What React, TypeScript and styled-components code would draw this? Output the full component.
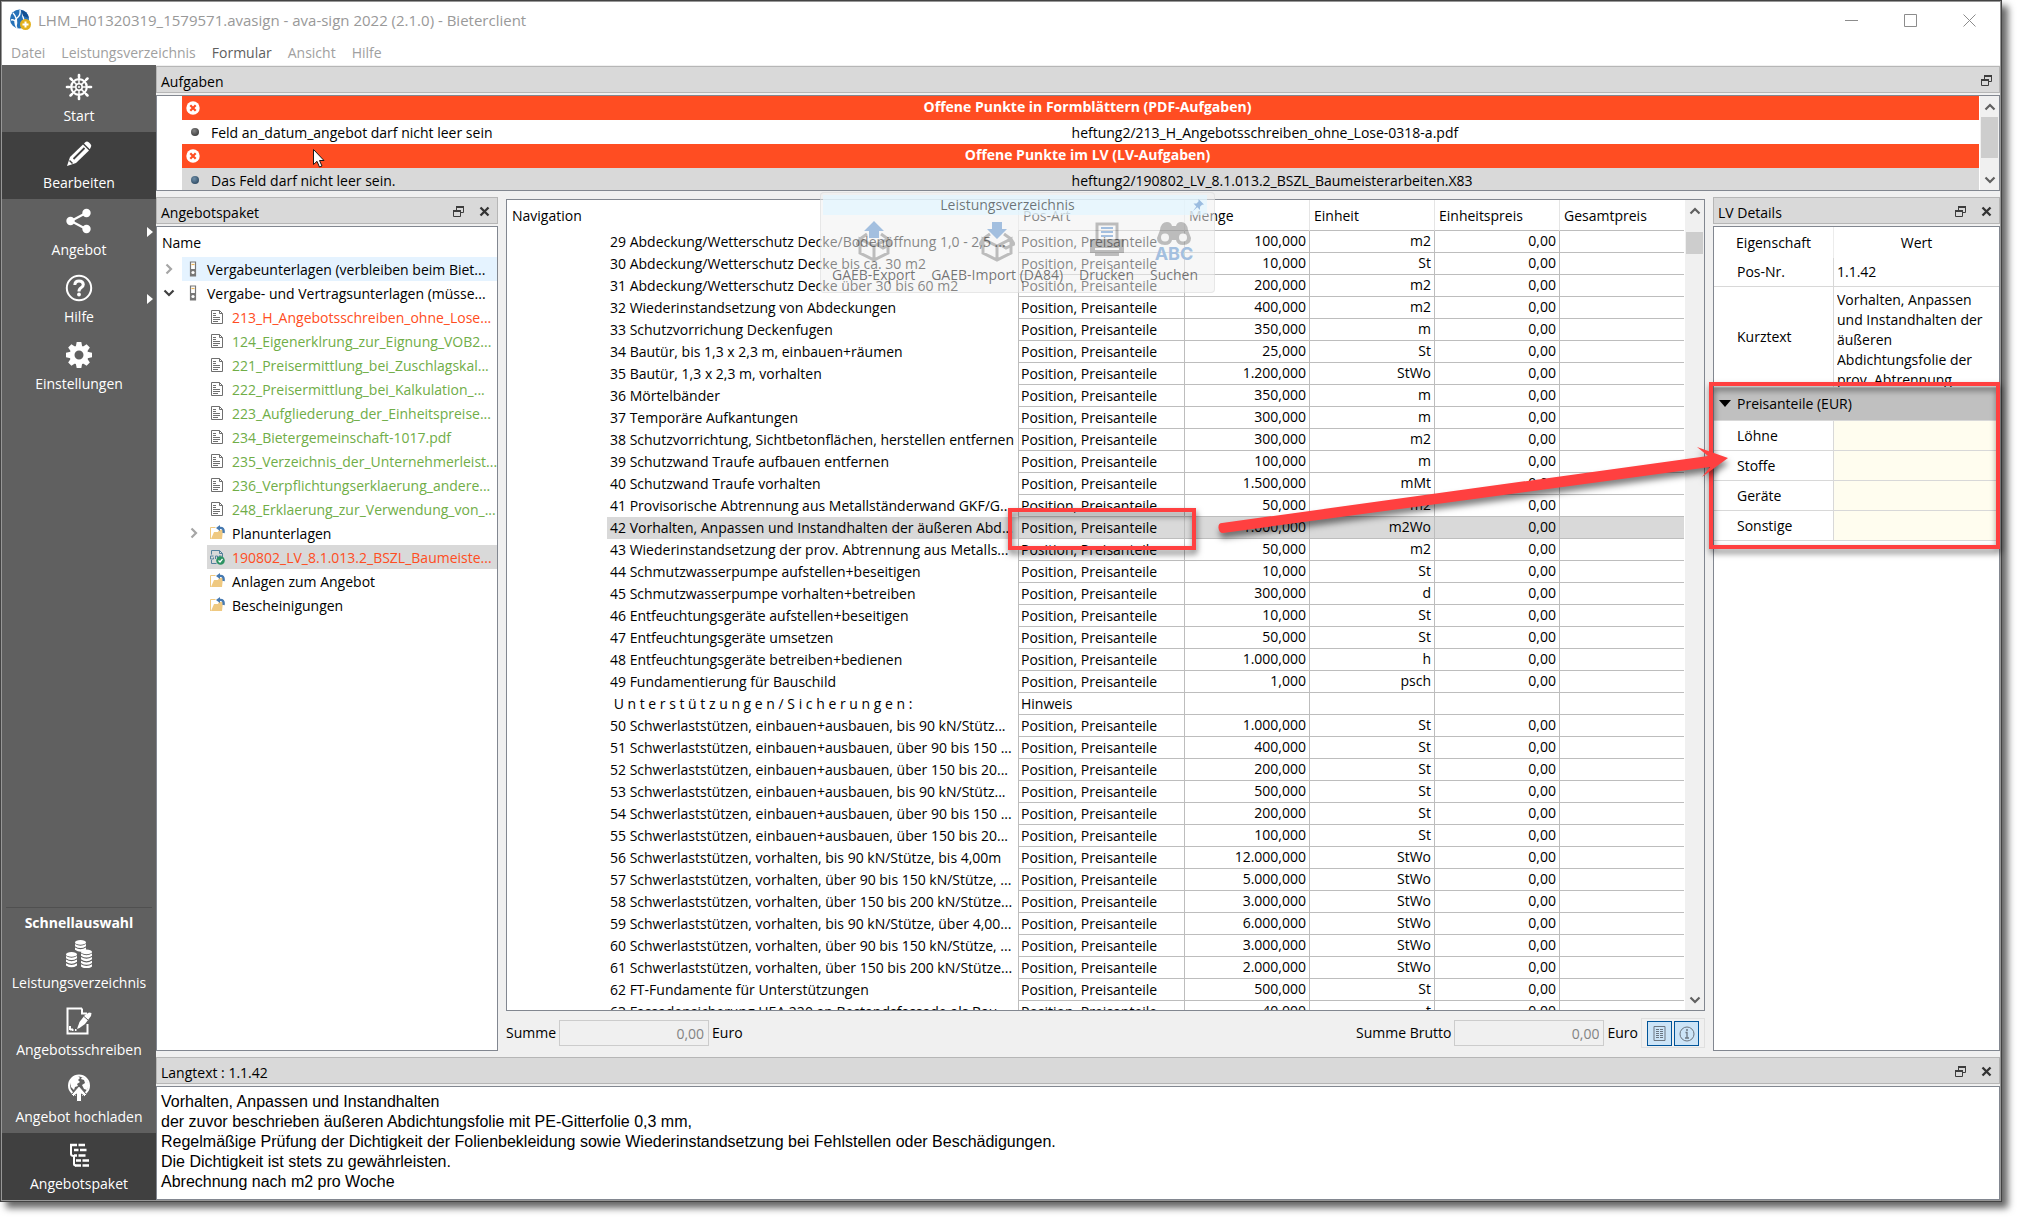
import React from "react";
import styled, { createGlobalStyle, css } from "styled-components";

const UI_FONT = `"Open Sans", "Noto Sans", sans-serif`;

const GlobalStyle = createGlobalStyle`
  *, *::before, *::after { box-sizing: border-box; }
  body { margin: 0; background: #fff; font: 14px/20px ${UI_FONT}; color: #000; overflow: hidden; }
  button, input, textarea { font: inherit; color: inherit; margin: 0; padding: 0; border: 0; background: none; border-radius: 0; }
  button { cursor: default; }
  svg { display: block; flex: none; }
  table { border-collapse: separate; border-spacing: 0; }
  th, td { padding: 0; font-weight: 400; text-align: left; }
  ul { list-style: none; margin: 0; padding: 0; }
  h1, h2, h3 { margin: 0; font: inherit; }
`;

/* ---------- window frame ---------- */

const Desktop = styled.div`
  height: 100vh;
  padding: 0 15px 15px 0;
  position: relative;
`;

const AppWindow = styled.div`
  height: 100%;
  display: flex;
  flex-direction: column;
  border: 1px solid #434343;
  box-shadow: inset 0 0 0 1px #979797, 6px 6px 7px rgba(0, 0, 0, 0.6);
  padding: 1px;
  background: #fff;
`;

const TitleBar = styled.header`
  display: flex;
  align-items: center;
  height: 38px;
  padding: 0 24px 2px 8px;
  gap: 6px;
  color: #999;
  font-size: 15px;
`;

const WindowTitle = styled.h1`
  flex: 1;
`;

const WindowButtons = styled.div`
  display: flex;
  gap: 46px;
  align-items: center;
`;

const WindowButton = styled.button`
  width: 13px;
  height: 13px;
`;

const MenuBar = styled.nav`
  display: flex;
  gap: 16px;
  height: 25px;
  padding: 0 9px;
  align-items: center;
`;

const MenuItem = styled.button<{ $enabled?: boolean }>`
  color: ${(p) => (p.$enabled ? "#5f5f5f" : "#a0a0a0")};
`;

const Body = styled.div`
  flex: 1;
  min-height: 0;
  display: flex;
`;

/* ---------- sidebar ---------- */

const Sidebar = styled.nav`
  width: 154px;
  background: #606060;
  color: #fff;
  display: flex;
  flex-direction: column;
`;

const SideButton = styled.button<{ $active?: boolean; $submenu?: boolean }>`
  position: relative;
  height: 67px;
  padding-top: 8px;
  display: flex;
  flex-direction: column;
  align-items: center;
  gap: 5px;
  color: #fff;
  background: ${(p) => (p.$active ? "#404040" : "transparent")};
  svg { height: 28px; }
  ${(p) =>
    p.$submenu &&
    css`
      &::after {
        content: "";
        position: absolute;
        right: 3px;
        top: 28px;
        border: 5px solid transparent;
        border-left: 6px solid #fff;
        border-right: 0;
      }
    `}
`;

const QuickHeading = styled.h2`
  margin: auto 4px 0;
  border-top: 1px solid #505050;
  padding: 5px 0 0;
  font-weight: 700;
  font-size: 14px;
  line-height: 19px;
  text-align: center;
`;

/* ---------- docks ---------- */

const Workspace = styled.main`
  flex: 1;
  min-width: 0;
  display: flex;
  flex-direction: column;
  gap: 6px;
  padding-top: 1px;
  background: #f0f0f0;
`;

const Middle = styled.div`
  flex: 1;
  min-height: 0;
  display: flex;
  gap: 8px;
`;

const Dock = styled.section<{ $width?: number }>`
  display: flex;
  flex-direction: column;
  gap: 2px;
  ${(p) => p.$width && `width: ${p.$width}px; flex: none;`}
`;

const DockHeader = styled.header`
  height: 27px;
  display: flex;
  align-items: center;
  gap: 15px;
  padding: 4px 7px 0 4px;
  background: #d9d9d9;
  border: 1px solid #b6b6b6;
`;

const DockTitle = styled.h2`
  flex: 1;
`;

const DockButton = styled.button`
  width: 11px;
  height: 16px;
`;

const Frame = styled.div<{ $height?: number }>`
  position: relative;
  background: #fff;
  border: 1px solid #828790;
  display: flex;
  overflow: hidden;
  ${(p) => (p.$height ? `height: ${p.$height}px;` : "flex: 1; min-height: 0;")}
`;

/* ---------- scroll bar ---------- */

const ScrollTrack = styled.div`
  width: 20px;
  flex: none;
  display: flex;
  flex-direction: column;
  background: #f0f0f0;
  border-left: 1px solid #fff;
`;

const ScrollArrow = styled.button`
  height: 21px;
  display: flex;
  align-items: center;
  justify-content: center;
`;

const ScrollSpace = styled.div<{ $offset?: number }>`
  flex: 1;
  padding-top: ${(p) => p.$offset ?? 0}px;
`;

const ScrollThumb = styled.div<{ $height: number }>`
  height: ${(p) => p.$height}px;
  margin: 0 1px;
  background: #cdcdcd;
`;

/* ---------- task list ---------- */

const TaskTable = styled.table`
  flex: 1;
  margin-left: 25px;
  table-layout: fixed;
  align-self: flex-start;
  td, th { height: 24px; line-height: 22px; white-space: nowrap; }
`;

const TaskGroup = styled.tr`
  background: #ff4d22;
  color: #fff;
  th { font-weight: 700; text-align: center; padding: 0 6px 2px 0; }
  svg { margin: 0 auto 0 4px; }
`;

const TaskRow = styled.tr<{ $selected?: boolean }>`
  background: ${(p) => (p.$selected ? "#d9d9d9" : "#fff")};
  td + td { padding-left: 9px; padding-top: 1px; }
  td + td + td { padding-left: 7px; }
`;

const Bullet = styled.span<{ $blue?: boolean }>`
  display: block;
  width: 8px;
  height: 8px;
  margin: 0 auto 0 9px;
  border-radius: 50%;
  background: radial-gradient(circle at 40% 35%, ${(p) => (p.$blue ? "#6f8fa9, #1d3850" : "#858585, #262626")});
`;

/* ---------- package tree ---------- */

const Tree = styled.ul`
  flex: 1;
  min-width: 0;
`;

const TreeHead = styled.li`
  height: 30px;
  padding: 6px 5px 0;
`;

const Node = styled.li`
  height: 24px;
  display: flex;
`;

const Toggle = styled.span<{ $level: number }>`
  width: ${(p) => (p.$level ? 50 : 25)}px;
  padding-right: 7px;
  flex: none;
  display: flex;
  align-items: center;
  justify-content: flex-end;
`;

const NodeLabel = styled.span<{ $color: string; $background?: string; $level: number }>`
  flex: 1;
  min-width: 0;
  display: flex;
  align-items: center;
  gap: ${(p) => (p.$level ? 7 : 10)}px;
  padding-top: 2px;
  padding-left: ${(p) => (p.$level ? 3 : 7)}px;
  white-space: nowrap;
  color: ${(p) => p.$color};
  background: ${(p) => p.$background ?? "transparent"};
  svg { margin-bottom: 2px; }
`;

/* ---------- position table ---------- */

const Center = styled.section`
  flex: 1;
  min-width: 0;
  padding: 2px 0 3px;
  display: flex;
  flex-direction: column;
  gap: 7px;
`;

const Positions = styled.table`
  flex: 1;
  min-width: 0;
  table-layout: fixed;
  align-self: flex-start;
  white-space: nowrap;
  thead th {
    height: 31px;
    padding: 2px 4px 0;
    border-bottom: 1px solid #bdbdbd;
    border-left: 1px solid #e5e5e5;
  }
  thead th:first-child { border-color: transparent; }
`;

const PositionRow = styled.tr<{ $selected?: boolean }>`
  th, td {
    height: 22px;
    line-height: 20px;
    background: ${(p) => (p.$selected ? "#d9d9d9" : "#fff")};
  }
  th { padding-left: 100px; background: #fff; overflow: hidden; }
  th span {
    display: block;
    height: 22px;
    line-height: 22px;
    padding-left: 3px;
    background: ${(p) => (p.$selected ? "#d9d9d9" : "transparent")};
  }
  td {
    position: relative;
    border-left: 1px solid #bdbdbd;
    border-bottom: 1px solid #bdbdbd;
    padding: 0 3px 1px;
    text-align: right;
  }
  th + td { text-align: left; padding: 1px 2px 0; }
`;

const CellMarker = styled.div`
  position: absolute;
  z-index: 2;
  inset: -9px -12px -12px -11px;
  border: 4px solid #ff4040;
  filter: drop-shadow(1px 4px 3px rgba(0, 0, 0, 0.55));
  pointer-events: none;
`;

const Totals = styled.footer`
  height: 30px;
  display: flex;
  align-items: center;
  gap: 3px;
`;

const Total = styled.label`
  display: flex;
  align-items: center;
  gap: 3px;
  &:nth-child(2) { margin-left: auto; }
`;

const TotalInput = styled.input`
  width: 150px;
  height: 26px;
  padding: 0 4px;
  border: 1px solid #ccc;
  background: #f0f0f0;
  color: #838383;
  text-align: right;
`;

const ToggleGroup = styled.div`
  display: flex;
  gap: 2px;
  height: 30px;
  padding: 2px 5px;
  border: 1px solid #dfdfdf;
`;

const ToggleButton = styled.button`
  width: 25px;
  height: 25px;
  display: flex;
  align-items: center;
  justify-content: center;
  border: 1px solid #005499;
  background: #cce4f7;
`;

/* ---------- LV details ---------- */

const Details = styled.table`
  width: 100%;
  table-layout: fixed;
  align-self: flex-start;
  td, th { border-bottom: 1px solid #d8d8d8; }
  tbody th { padding-left: 23px; }
  td { border-left: 1px solid #d8d8d8; padding-left: 3px; }
  thead th { height: 31px; border-bottom: 0; text-align: center; }
  thead th + th { border-left: 1px solid #ececec; }
`;

const DetailRow = styled.tr<{ $height: number }>`
  th, td { height: ${(p) => p.$height}px; }
`;

const ShortText = styled.div`
  height: 99px;
  padding-top: 2px;
  overflow: hidden;
`;

const GroupHead = styled.th`
  height: 33px;
  background: #c0c0c0;
  && { padding-left: 5px; }
  button { display: flex; align-items: center; gap: 6px; }
`;

const PriceInput = styled.input`
  display: block;
  width: 100%;
  height: 29px;
  background: #fffdef;
`;

const PriceCell = styled.td`
  && { padding: 0; }
`;

const GroupMarker = styled.div`
  position: absolute;
  z-index: 3;
  top: 185px;
  left: -4px;
  right: 0;
  height: 167px;
  border: 4px solid #ff4040;
  filter: drop-shadow(1px 4px 3px rgba(0, 0, 0, 0.55));
  pointer-events: none;
`;

const DetailDock = styled(Dock)`
  position: relative;
`;

/* ---------- long text ---------- */

const LongText = styled.textarea`
  flex: 1;
  padding: 5px 4px 0;
  border: 0;
  outline: 0;
  resize: none;
  overflow: hidden;
  font: 16px/20px "Liberation Sans", Arial, sans-serif;
`;

/* ---------- floating toolbar ---------- */

const FloatingBar = styled.div`
  position: absolute;
  z-index: 4;
  left: 820px;
  top: 192px;
  width: 395px;
  height: 101px;
  padding: 2px;
  border: 1px solid rgba(200, 200, 200, 0.35);
  border-radius: 4px;
  background: rgba(240, 240, 240, 0.55);
  color: rgba(0, 0, 0, 0.55);
`;

const FloatingTitle = styled.div`
  display: flex;
  align-items: center;
  height: 20px;
  padding-right: 3px;
  margin-right: 5px;
  background: rgba(225, 245, 255, 0.7);
  span { flex: 1; text-align: center; }
`;

const FloatingTools = styled.div`
  display: flex;
  gap: 16px;
  padding: 5px 9px 0;
`;

const FloatingTool = styled.button`
  display: flex;
  flex-direction: column;
  align-items: center;
  gap: 3px;
`;

const ArrowLayer = styled.svg`
  position: absolute;
  z-index: 5;
  left: 1210px;
  top: 440px;
  pointer-events: none;
  filter: drop-shadow(1px 5px 3px rgba(0, 0, 0, 0.5));
`;

const Cursor = styled.svg`
  position: absolute;
  z-index: 5;
  left: 312px;
  top: 148px;
`;

/* ---------- drawings ---------- */

const AppLogo = () => (
  <svg width="22" height="22" viewBox="0 0 22 22">
    <circle cx="9.500" cy="10" r="9.500" fill="#2672b8" />
    <path d="M3 4q5 5 3 14M10 1q1 5-3 8t0 10M13 2q-1 5 1 9M1 11q3-1 5 2" stroke="#fff" strokeWidth="1.400" fill="none" />
    <path d="M11 1q6 1 8 8l-6-2z" fill="#124f91" />
    <circle cx="15.500" cy="15.500" r="5.500" fill="#e3b11d" />
    <path d="M15.500 12.500v6M12.500 15.500h6" stroke="#fff" strokeWidth="2" />
  </svg>
);

const WheelIcon = () => (
  <svg width="28" viewBox="-14 -14 28 28" stroke="#fff" fill="none">
    <circle r="7.800" strokeWidth="2.200" />
    <circle r="3.200" strokeWidth="1.600" />
    <circle r="1" fill="#fff" stroke="none" />
    {[0, 45, 90, 135, 180, 225, 270, 315].map((a) => (
      <g key={a} transform={`rotate(${a})`}>
        <path d="M3 0h9.500" strokeWidth="1.500" />
        <path d="M10 0h2" strokeWidth="2.600" strokeLinecap="round" />
      </g>
    ))}
  </svg>
);

const PencilIcon = () => (
  <svg width="28" viewBox="0 0 28 28">
    <path d="M2 26l3-9L18 4.500l6 6L11 23z" fill="#fff" />
    <path d="M19 3.500l1.500-1.500q1.500-1.300 3.500.5l1.500 1.500q1.500 1.700.3 3.300L24.800 9.300z" fill="#fff" />
    <path d="M8.500 19L19.500 8" stroke="#404040" strokeWidth="1.800" />
    <path d="M4.500 20.500l3 3" stroke="#404040" strokeWidth="1.400" />
  </svg>
);

const ShareIcon = () => (
  <svg width="28" viewBox="0 0 28 28" fill="#fff">
    <path d="M6 14L21 6M6 14l15 8" stroke="#fff" strokeWidth="2.200" />
    <circle cx="5.500" cy="14" r="4.200" />
    <circle cx="21.500" cy="6" r="4.200" />
    <circle cx="21.500" cy="22" r="4.200" />
  </svg>
);

const HelpIcon = () => (
  <svg width="28" viewBox="0 0 28 28" stroke="#fff" fill="none">
    <circle cx="14" cy="14" r="12.200" strokeWidth="2" />
    <path d="M9.800 11q.2-4 4.200-4t4.300 3.500q0 2-2.200 3.300T14 17.500" strokeWidth="3" />
    <circle cx="14" cy="20.500" r="1.900" fill="#fff" stroke="none" />
  </svg>
);

const GearIcon = () => (
  <svg width="28" viewBox="-14 -14 28 28">
    <circle r="7" stroke="#fff" strokeWidth="5" fill="none" />
    {Array.from({ length: 8 }, (_, i) => (
      <path key={i} transform={`rotate(${i * 45})`} d="M-3.200-8.500L-2.300-13h4.600l.9 4.500z" fill="#fff" />
    ))}
  </svg>
);

const CoinStack = ({ x, y, count }: { x: number; y: number; count: number }) => (
  <g transform={`translate(${x} ${y})`}>
    <ellipse cx="5.500" cy="2.400" rx="5.500" ry="2.400" fill="#fff" />
    {Array.from({ length: count }, (_, i) => (
      <path key={i} d={`M0 ${i * 3.6 + 4}q5.500 3.400 11 0v2.200q-5.500 3.800-11 0z`} fill="#fff" />
    ))}
  </g>
);

const CoinsIcon = () => (
  <svg width="28" viewBox="0 0 28 28">
    <CoinStack x={10} y={0} count={2} />
    <CoinStack x={1} y={12} count={3} />
    <CoinStack x={16} y={9.5} count={4} />
  </svg>
);

const SignIcon = () => (
  <svg width="28" viewBox="0 0 28 28" fill="none" stroke="#fff">
    <path d="M17 1.500H2.500v25h20V17M17 1.500v5h5" strokeWidth="2" />
    <path d="M5 19v4M7 23h1.500M10 23h1.500M5 22.500h3" strokeWidth="2" />
    <path d="M12 22l2.500-7L20 8l4-2.500 2.500.5L26 9l-6 8-5.500 4z" fill="#fff" stroke="none" />
    <path d="M19 9.500l4 3.500" stroke="#606060" />
  </svg>
);

const UploadIcon = () => (
  <svg width="28" viewBox="0 0 28 28">
    <circle cx="14" cy="11.500" r="10" fill="none" stroke="#fff" strokeWidth="2" />
    <path d="M5 8q2-5 8-6l2 2-2 2 2 2-3 2 1 2-3 1-1 3-3-3zM17 3l4 2 3 6-2 5-3-1-2-4 3-2-1-3-3-1z" fill="#fff" />
    <path d="M14 12l7.500 8.500-2 2-3-2.500V27.500h-5V20l-3 2.500-2-2z" fill="#fff" stroke="#606060" strokeWidth="1" />
  </svg>
);

const PackageIcon = () => (
  <svg width="28" viewBox="0 0 28 28" stroke="#fff" strokeWidth="2.600" fill="none">
    <path d="M6 3v10q0 2 3 2M9 14v9q0 1.500 2 1.500" strokeWidth="2" />
    <path d="M5 4h7M13.500 4H20M9 9h4.500M15 9h6.500M9 14.500h3M13.500 14.500h7M11 19.500h5M17.500 19.500H24M10 24.500h6M17.500 24.500H24" />
  </svg>
);

const FloatIcon = () => (
  <svg width="11" height="16" viewBox="0 0 11 16" fill="none" stroke="#3d3d3d">
    <path d="M3.500 5V1.500h7v6H8" />
    <path d="M3 2h8" strokeWidth="2" />
    <path d="M.5 5.500h7v6h-7z" />
    <path d="M0 6h8" strokeWidth="2" />
  </svg>
);

const CloseIcon = () => (
  <svg width="11" height="16" viewBox="0 0 11 16">
    <path d="M1.500 2.500l8 8M9.500 2.500l-8 8" stroke="#333" strokeWidth="2.300" />
  </svg>
);

const Chevron = ({ rotate = 0, color = "#606060" }: { rotate?: number; color?: string }) => (
  <svg width="12" height="12" viewBox="-6 -6 12 12">
    <path transform={`rotate(${rotate})`} d="M-4.500 2.500L0-2 4.500 2.500" fill="none" stroke={color} strokeWidth="2.200" />
  </svg>
);

const BinderIcon = () => (
  <svg width="8" height="16" viewBox="0 0 8 16">
    <path d="M1.500 1h5v14h-5z" fill="#fff" stroke="#777" strokeWidth="1.200" />
    <path d="M2.500 3.500h3" stroke="#edb65a" strokeWidth="1.200" />
    <path d="M1 8h6v7H1z" fill="#777" />
    <circle cx="4" cy="11.500" r="1.600" fill="#fff" />
  </svg>
);

const FileIcon = () => (
  <svg width="15" height="16" viewBox="0 0 15 16" fill="none" stroke="#6f6f6f">
    <path d="M1.500 1.500h8l3 3v10h-11zM9.500 1.500v3h3" />
    <path d="M3 4.500h3M3 6.500h3M3 8.500h7M3 10.500h7M3 12.500h5" />
  </svg>
);

const FolderIcon = () => (
  <svg width="15" height="16" viewBox="0 0 15 16">
    <path d="M.5 14V2.500h5" fill="none" stroke="#efc981" />
    <path d="M1 14l3-7h4l1-2h4l-1 9z" fill="#efc981" />
    <path d="M13.500 8q1-6-4.500-5" fill="none" stroke="#4679b0" strokeWidth="2.400" />
    <path d="M6 3L10 0v6z" fill="#4679b0" />
  </svg>
);

const LvIcon = () => (
  <svg width="15" height="16" viewBox="0 0 15 16" fill="none" stroke="#54809c">
    <path d="M1.500 5.500v-4h8l3 3v5M1.500 11v3.500h5M9.500 1.500v3h3" />
    <path d="M3.500 7H.5v3h3V8.500M5.500 10V7h2v3M9 10V7h2.500" />
    <circle cx="10.500" cy="11.500" r="4.300" fill="#2c9363" stroke="none" />
    <path d="M8.500 11.500l1.500 1.500 2.500-3" stroke="#fff" strokeWidth="1.200" />
  </svg>
);

const ErrorIcon = () => (
  <svg width="14" height="14" viewBox="0 0 14 14">
    <circle cx="7" cy="7" r="6.700" fill="#fff" />
    <path d="M4.300 4.300l5.400 5.400M9.700 4.300l-5.400 5.400" stroke="#ff4d22" strokeWidth="2.200" />
  </svg>
);

const BoxIcon = ({ down }: { down?: boolean }) => (
  <svg width="36" height="42" viewBox="0 0 36 42" fill="none">
    <path d="M4 19l14 7 14-7v14l-14 7-14-7zM18 26v14M4 19l7-5M32 19l-7-5M4 19l-3 5 5 2M32 19l3 5-8 4-5-3" stroke="rgba(0,0,0,.24)" strokeWidth="3" />
    <path d={down ? "M13 2h10v7h5L18 19 8 9h5z" : "M13 18V11H8L18 1l10 10h-5v7z"} fill="#a3bfdf" />
  </svg>
);

const PrinterIcon = () => (
  <svg width="38" height="42" viewBox="0 0 38 42" fill="none">
    <path d="M9 20V4h20v16" stroke="rgba(0,0,0,.24)" strokeWidth="3" />
    <path d="M13 8h12M13 12h12M13 16h12" stroke="#a3bfdf" strokeWidth="2" />
    <path d="M2 19h34v14h-5v-5H7v5H2zM7 30h24v6H7z" fill="rgba(0,0,0,.24)" />
  </svg>
);

const SearchIcon = () => (
  <svg width="40" height="42" viewBox="0 0 40 42">
    <path d="M6 10q1-8 7-8 4 0 5 4h4q1-4 5-4 6 0 7 8l3 8q0 7-8 7-6 0-7-5h-4q-1 5-7 5-8 0-8-7z" fill="rgba(0,0,0,.24)" />
    <circle cx="11" cy="17.500" r="4" fill="#f4f4f4" />
    <circle cx="29" cy="17.500" r="4" fill="#f4f4f4" />
    <text x="20" y="40" fontSize="18" fontWeight="700" fill="#a3bfdf" textAnchor="middle" fontFamily="Inter, sans-serif">ABC</text>
  </svg>
);

const PinIcon = () => (
  <svg width="12" height="14" viewBox="0 0 12 14">
    <path d="M6.500 1L12 6.500l-2 .3-2 2V12L5.300 9.300 1 13l3.300-4.500L1.500 5.500h3l2-2z" fill="#9bbce0" />
  </svg>
);

const PageIcon = () => (
  <svg width="13" height="17" viewBox="0 0 13 17" fill="none" stroke="#6b7580">
    <path d="M1 1.500h11v14H1z" />
    <path d="M3 4.500h7M3 6.500h7M3 8.500h7M3 10.500h7M3 12.500h7" strokeDasharray="3 1" />
  </svg>
);

const InfoIcon = () => (
  <svg width="16" height="16" viewBox="0 0 16 16" fill="none" stroke="#6b7580">
    <circle cx="8" cy="8" r="7" />
    <path d="M6.500 6.500H8V12M6 12h4" strokeWidth="1.300" />
    <circle cx="8" cy="4" r="1" fill="#6b7580" stroke="none" />
  </svg>
);

/* ---------- data ---------- */

const sideItems = [
  { label: "Start", icon: <WheelIcon /> },
  { label: "Bearbeiten", icon: <PencilIcon />, active: true },
  { label: "Angebot", icon: <ShareIcon />, submenu: true },
  { label: "Hilfe", icon: <HelpIcon />, submenu: true },
  { label: "Einstellungen", icon: <GearIcon /> },
];

const quickItems = [
  { label: "Leistungsverzeichnis", icon: <CoinsIcon /> },
  { label: "Angebotsschreiben", icon: <SignIcon /> },
  { label: "Angebot hochladen", icon: <UploadIcon /> },
  { label: "Angebotspaket", icon: <PackageIcon />, active: true },
];

const GREEN = "#70ad47";
const RED = "#ff4d22";

type TreeEntry = { label: string; level: number; icon: React.ReactNode; color?: string; toggle?: "open" | "closed"; background?: string };

const tree: TreeEntry[] = [
  { label: "Vergabeunterlagen (verbleiben beim Biet...", level: 0, icon: <BinderIcon />, toggle: "closed", background: "#e5f3ff" },
  { label: "Vergabe- und Vertragsunterlagen (müsse...", level: 0, icon: <BinderIcon />, toggle: "open" },
  { label: "213_H_Angebotsschreiben_ohne_Lose...", level: 1, icon: <FileIcon />, color: RED },
  ...[
    "124_Eigenerklrung_zur_Eignung_VOB2...",
    "221_Preisermittlung_bei_Zuschlagskal...",
    "222_Preisermittlung_bei_Kalkulation_...",
    "223_Aufgliederung_der_Einheitspreise...",
    "234_Bietergemeinschaft-1017.pdf",
    "235_Verzeichnis_der_Unternehmerleist...",
    "236_Verpflichtungserklaerung_andere...",
    "248_Erklaerung_zur_Verwendung_von_...",
  ].map((label) => ({ label, level: 1, icon: <FileIcon />, color: GREEN })),
  { label: "Planunterlagen", level: 1, icon: <FolderIcon />, toggle: "closed" },
  { label: "190802_LV_8.1.013.2_BSZL_Baumeiste...", level: 1, icon: <LvIcon />, color: RED, background: "#d9d9d9" },
  { label: "Anlagen zum Angebot", level: 1, icon: <FolderIcon /> },
  { label: "Bescheinigungen", level: 1, icon: <FolderIcon /> },
];

const positions: [string, string?, string?][] = [
  ["29 Abdeckung/Wetterschutz Decke/Bodenöffnung 1,0 - 2,5 ...", "100,000", "m2"],
  ["30 Abdeckung/Wetterschutz Decke bis ca. 30 m2", "10,000", "St"],
  ["31 Abdeckung/Wetterschutz Decke über 30 bis 60 m2", "200,000", "m2"],
  ["32 Wiederinstandsetzung von Abdeckungen", "400,000", "m2"],
  ["33 Schutzvorrichung Deckenfugen", "350,000", "m"],
  ["34 Bautür, bis 1,3 x 2,3 m, einbauen+räumen", "25,000", "St"],
  ["35 Bautür, 1,3 x 2,3 m, vorhalten", "1.200,000", "StWo"],
  ["36 Mörtelbänder", "350,000", "m"],
  ["37 Temporäre Aufkantungen", "300,000", "m"],
  ["38 Schutzvorrichtung, Sichtbetonflächen, herstellen entfernen", "300,000", "m2"],
  ["39 Schutzwand Traufe aufbauen entfernen", "100,000", "m"],
  ["40 Schutzwand Traufe vorhalten", "1.500,000", "mMt"],
  ["41 Provisorische Abtrennung aus Metallständerwand GKF/G...", "50,000", "m2"],
  ["42 Vorhalten, Anpassen und Instandhalten der äußeren Abd...", "1.000,000", "m2Wo"],
  ["43 Wiederinstandsetzung der prov. Abtrennung aus Metalls...", "50,000", "m2"],
  ["44 Schmutzwasserpumpe aufstellen+beseitigen", "10,000", "St"],
  ["45 Schmutzwasserpumpe vorhalten+betreiben", "300,000", "d"],
  ["46 Entfeuchtungsgeräte aufstellen+beseitigen", "10,000", "St"],
  ["47 Entfeuchtungsgeräte umsetzen", "50,000", "St"],
  ["48 Entfeuchtungsgeräte betreiben+bedienen", "1.000,000", "h"],
  ["49 Fundamentierung für Bauschild", "1,000", "psch"],
  ["\u00a0U n t e r s t ü t z u n g e n / S i c h e r u n g e n :"],
  ["50 Schwerlaststützen, einbauen+ausbauen, bis 90 kN/Stütz...", "1.000,000", "St"],
  ["51 Schwerlaststützen, einbauen+ausbauen, über 90 bis 150 ...", "400,000", "St"],
  ["52 Schwerlaststützen, einbauen+ausbauen, über 150 bis 20...", "200,000", "St"],
  ["53 Schwerlaststützen, einbauen+ausbauen, bis 90 kN/Stütz...", "500,000", "St"],
  ["54 Schwerlaststützen, einbauen+ausbauen, über 90 bis 150 ...", "200,000", "St"],
  ["55 Schwerlaststützen, einbauen+ausbauen, über 150 bis 20...", "100,000", "St"],
  ["56 Schwerlaststützen, vorhalten, bis 90 kN/Stütze, bis 4,00m", "12.000,000", "StWo"],
  ["57 Schwerlaststützen, vorhalten, über 90 bis 150 kN/Stütze, ...", "5.000,000", "StWo"],
  ["58 Schwerlaststützen, vorhalten, über 150 bis 200 kN/Stütze...", "3.000,000", "StWo"],
  ["59 Schwerlaststützen, vorhalten, bis 90 kN/Stütze, über 4,00...", "6.000,000", "StWo"],
  ["60 Schwerlaststützen, vorhalten, über 90 bis 150 kN/Stütze, ...", "3.000,000", "StWo"],
  ["61 Schwerlaststützen, vorhalten, über 150 bis 200 kN/Stütze...", "2.000,000", "StWo"],
  ["62 FT-Fundamente für Unterstützungen", "500,000", "St"],
  ["63 Fassadensicherung HEA 220 an Bestandsfassade als Bau...", "40,000", "t"],
];

const longText = `Vorhalten, Anpassen und Instandhalten
der zuvor beschrieben äußeren Abdichtungsfolie mit PE-Gitterfolie 0,3 mm,
Regelmäßige Prüfung der Dichtigkeit der Folienbekleidung sowie Wiederinstandsetzung bei Fehlstellen oder Beschädigungen.
Die Dichtigkeit ist stets zu gewährleisten.
Abrechnung nach m2 pro Woche`;

/* ---------- parts ---------- */

const DockBar = ({ title, closable = true }: { title: string; closable?: boolean }) => (
  <DockHeader>
    <DockTitle>{title}</DockTitle>
    <DockButton aria-label="Abdocken"><FloatIcon /></DockButton>
    {closable && <DockButton aria-label="Schließen"><CloseIcon /></DockButton>}
  </DockHeader>
);

const ScrollBar = ({ thumb, offset }: { thumb: number; offset?: number }) => (
  <ScrollTrack>
    <ScrollArrow aria-label="Nach oben"><Chevron /></ScrollArrow>
    <ScrollSpace $offset={offset}><ScrollThumb $height={thumb} /></ScrollSpace>
    <ScrollArrow aria-label="Nach unten"><Chevron rotate={180} /></ScrollArrow>
  </ScrollTrack>
);

const Tasks = () => (
  <Dock>
    <DockBar title="Aufgaben" closable={false} />
    <Frame $height={96}>
      <TaskTable>
        <colgroup><col style={{ width: 20 }} /><col style={{ width: "48%" }} /><col /></colgroup>
        <tbody>
          <TaskGroup><td><ErrorIcon /></td><th colSpan={2}>Offene Punkte in Formblättern (PDF-Aufgaben)</th></TaskGroup>
          <TaskRow><td><Bullet /></td><td>Feld an_datum_angebot darf nicht leer sein</td><td>heftung2/213_H_Angebotsschreiben_ohne_Lose-0318-a.pdf</td></TaskRow>
          <TaskGroup><td><ErrorIcon /></td><th colSpan={2}>Offene Punkte im LV (LV-Aufgaben)</th></TaskGroup>
          <TaskRow $selected><td><Bullet $blue /></td><td>Das Feld darf nicht leer sein.</td><td>heftung2/190802_LV_8.1.013.2_BSZL_Baumeisterarbeiten.X83</td></TaskRow>
        </tbody>
      </TaskTable>
      <ScrollBar thumb={41} />
    </Frame>
  </Dock>
);

const PackageTree = () => (
  <Dock $width={342}>
    <DockBar title="Angebotspaket" />
    <Frame>
      <Tree>
        <TreeHead>Name</TreeHead>
        {tree.map((n) => (
          <Node key={n.label}>
            <Toggle $level={n.level}>
              {n.toggle && <Chevron rotate={n.toggle === "open" ? 180 : 90} color={n.toggle === "open" ? "#404040" : "#a6a6a6"} />}
            </Toggle>
            <NodeLabel $level={n.level} $color={n.color ?? "#000"} $background={n.background}>
              {n.icon}
              {n.label}
            </NodeLabel>
          </Node>
        ))}
      </Tree>
    </Frame>
  </Dock>
);

const PositionTable = () => (
  <Center>
    <Frame>
      <Positions>
        <colgroup>
          <col />
          <col style={{ width: 166 }} />
          {[0, 1, 2, 3].map((i) => <col key={i} style={{ width: 125 }} />)}
        </colgroup>
        <thead>
          <tr>{["Navigation", "Pos-Art", "Menge", "Einheit", "Einheitspreis", "Gesamtpreis"].map((h) => <th key={h}>{h}</th>)}</tr>
        </thead>
        <tbody>
          {positions.map(([name, amount, unit]) => {
            const selected = name.startsWith("42 ");
            return (
              <PositionRow key={name} $selected={selected}>
                <th scope="row"><span>{name}</span></th>
                <td>{amount ? "Position, Preisanteile" : "Hinweis"}{selected && <CellMarker />}</td>
                <td>{amount}</td>
                <td>{unit}</td>
                <td>{amount && "0,00"}</td>
                <td />
              </PositionRow>
            );
          })}
        </tbody>
      </Positions>
      <ScrollBar thumb={22} offset={11} />
    </Frame>
    <Totals>
      <Total>Summe<TotalInput disabled defaultValue="0,00" />Euro</Total>
      <Total>Summe Brutto<TotalInput disabled defaultValue="0,00" />Euro</Total>
      <ToggleGroup>
        <ToggleButton aria-label="Langtext"><PageIcon /></ToggleButton>
        <ToggleButton aria-label="Details"><InfoIcon /></ToggleButton>
      </ToggleGroup>
    </Totals>
  </Center>
);

const LvDetails = () => (
  <DetailDock $width={287}>
    <DockBar title="LV Details" />
    <Frame>
      <Details>
        <colgroup><col style={{ width: 119 }} /><col /></colgroup>
        <thead><tr><th>Eigenschaft</th><th>Wert</th></tr></thead>
        <tbody>
          <DetailRow $height={29}><th scope="row">Pos-Nr.</th><td>1.1.42</td></DetailRow>
          <DetailRow $height={101}>
            <th scope="row">Kurztext</th>
            <td><ShortText>Vorhalten, Anpassen<br />und Instandhalten der<br />äußeren<br />Abdichtungsfolie der<br />prov. Abtrennung</ShortText></td>
          </DetailRow>
          <tr>
            <GroupHead colSpan={2}>
              <button><svg width="12" height="8" viewBox="0 0 12 8"><path d="M0 0h12L6 7z" /></svg>Preisanteile (EUR)</button>
            </GroupHead>
          </tr>
          {["Löhne", "Stoffe", "Geräte", "Sonstige"].map((n) => (
            <DetailRow key={n} $height={30}>
              <th scope="row"><label htmlFor={n}>{n}</label></th>
              <PriceCell><PriceInput id={n} /></PriceCell>
            </DetailRow>
          ))}
        </tbody>
      </Details>
    </Frame>
    <GroupMarker />
  </DetailDock>
);

export default function App() {
  return (
    <Desktop>
      <GlobalStyle />
      <AppWindow>
        <TitleBar>
          <AppLogo />
          <WindowTitle>LHM_H01320319_1579571.avasign - ava-sign 2022 (2.1.0) - Bieterclient</WindowTitle>
          <WindowButtons>
            <WindowButton aria-label="Minimieren"><svg width="13" height="13" stroke="#8c8c8c"><path d="M0 6.500h13" /></svg></WindowButton>
            <WindowButton aria-label="Maximieren"><svg width="13" height="13" stroke="#8c8c8c" fill="none"><path d="M.5.5h12v12H.5z" /></svg></WindowButton>
            <WindowButton aria-label="Beenden"><svg width="13" height="13" stroke="#8c8c8c"><path d="M.5.5l12 12M12.500.5l-12 12" /></svg></WindowButton>
          </WindowButtons>
        </TitleBar>
        <MenuBar>
          {["Datei", "Leistungsverzeichnis", "Formular", "Ansicht", "Hilfe"].map((m) => (
            <MenuItem key={m} $enabled={m === "Formular"}>{m}</MenuItem>
          ))}
        </MenuBar>
        <Body>
          <Sidebar>
            {sideItems.map((s) => (
              <SideButton key={s.label} $active={s.active} $submenu={s.submenu}>{s.icon}{s.label}</SideButton>
            ))}
            <QuickHeading>Schnellauswahl</QuickHeading>
            {quickItems.map((s) => (
              <SideButton key={s.label} $active={s.active}>{s.icon}{s.label}</SideButton>
            ))}
          </Sidebar>
          <Workspace>
            <Tasks />
            <Middle>
              <PackageTree />
              <PositionTable />
              <LvDetails />
            </Middle>
            <Dock>
              <DockBar title="Langtext : 1.1.42" />
              <Frame $height={114}>
                <LongText aria-label="Langtext" readOnly value={longText} />
              </Frame>
            </Dock>
          </Workspace>
        </Body>
      </AppWindow>
      <FloatingBar>
        <FloatingTitle><span>Leistungsverzeichnis</span><PinIcon /></FloatingTitle>
        <FloatingTools>
          <FloatingTool><BoxIcon />GAEB-Export</FloatingTool>
          <FloatingTool><BoxIcon down />GAEB-Import (DA84)</FloatingTool>
          <FloatingTool><PrinterIcon />Drucken</FloatingTool>
          <FloatingTool><SearchIcon />Suchen</FloatingTool>
        </FloatingTools>
      </FloatingBar>
      <ArrowLayer width="530" height="110" viewBox="0 0 530 110">
        <path d="M12 83L498 16l-11-9 31 11-26 19 8-10L13 93q-4 0-4.500-5t3.500-5z" fill="#ff4040" />
      </ArrowLayer>
      <Cursor width="14" height="20" viewBox="0 0 14 20">
        <path d="M1.500 1.500v15l3.500-3.200 2.500 5.700 2.500-1-2.500-5.500h4.500z" fill="#fff" stroke="#1a1a1a" />
      </Cursor>
    </Desktop>
  );
}
